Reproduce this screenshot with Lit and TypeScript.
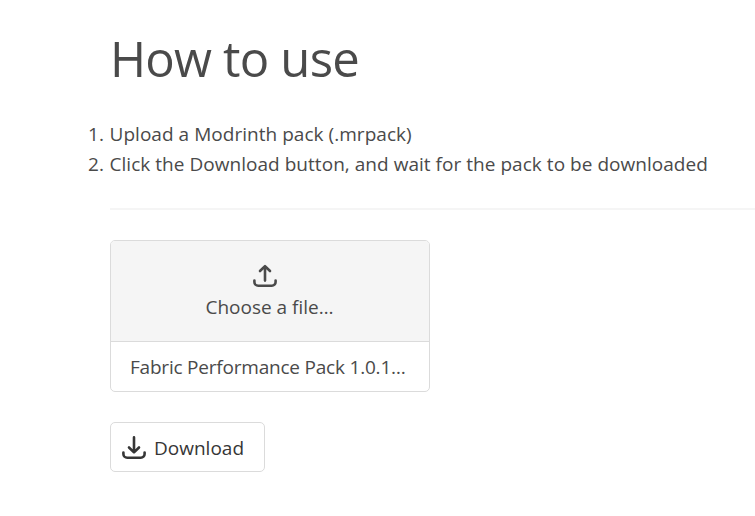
import { LitElement, html, css, svg } from "lit";
import { customElement } from "lit/decorators.js";

const tray = svg`<path d="M1.4 16.6v1.4a3.8 3.8 0 0 0 3.8 3.8h13.6a3.8 3.8 0 0 0 3.8-3.8v-1.4"/>`;

@customElement("app-root")
export class AppRoot extends LitElement {
  static styles = css`
    :host {
      display: block;
      height: 516px;
      overflow: hidden;
      box-sizing: border-box;
      padding: 27px 0 0 110px;
      background: #fff;
      color: #4a4a4a;
      font: 400 19px/30px "Open Sans", "Noto Sans", sans-serif;
    }
    h1 {
      margin: 0 0 30px;
      font-size: 49px;
      line-height: 62px;
      font-weight: 400;
      letter-spacing: -0.8px;
    }
    ol {
      margin: 0 0 29px;
      padding: 0;
      list-style: none;
      white-space: nowrap;
    }
    li { display: flex; letter-spacing: 0.035px; }
    .num {
      width: 30px;
      margin-left: -36px;
      padding-right: 6px;
      text-align: right;
    }
    li span:last-child { margin-left: -0.5px; }
    hr { height: 2px; margin: 0 0 30px; border: 0; background: #f5f5f5; }
    .file {
      width: 320px;
      height: 152px;
      box-sizing: border-box;
      border: 1px solid #dbdbdb;
      border-radius: 5px;
      overflow: hidden;
    }
    .cta {
      height: 100px;
      display: flex;
      flex-direction: column;
      align-items: center;
      background: #f5f5f5;
      border-bottom: 1px solid #dbdbdb;
    }
    .cta svg { margin: 23px 10px 0 0; }
    .cta span { margin: 4px 1px 0 0; }
    .name { padding: 0 19px; line-height: 50px; white-space: nowrap; letter-spacing: -0.21px; }
    .button {
      width: 155px;
      height: 50px;
      box-sizing: border-box;
      margin-top: 30px;
      padding: 1px 0 0 11px;
      display: flex;
      align-items: center;
      gap: 8px;
      border: 1px solid #dbdbdb;
      border-radius: 5px;
      background: #fff;
      color: #363636;
      font: inherit;
    }
    svg {
      display: block;
      flex: none;
      width: 24px;
      height: 24px;
      fill: none;
      stroke: currentColor;
      stroke-width: 2.6;
      stroke-linecap: round;
      stroke-linejoin: round;
    }
  `;

  render() {
    return html`
      <h1>How to use</h1>
      <ol>
        <li><span class="num">1.</span><span>Upload a Modrinth pack (.mrpack)</span></li>
        <li><span class="num">2.</span><span>Click the Download button, and wait for the pack to be downloaded</span></li>
      </ol>
      <hr />
      <div class="file">
        <div class="cta">
          <svg viewBox="0 0 24 24"><path d="M12 16.6V2.2M7 7l5-4.9 5 4.9" />${tray}</svg>
          <span>Choose a file…</span>
        </div>
        <div class="name">Fabric Performance Pack 1.0.1…</div>
      </div>
      <button class="button">
        <svg viewBox="0 0 24 24"><path d="M12 1.4v14.8M7 11.5l5 4.9 5-4.9" />${tray}</svg>
        <span>Download</span>
      </button>
    `;
  }
}
